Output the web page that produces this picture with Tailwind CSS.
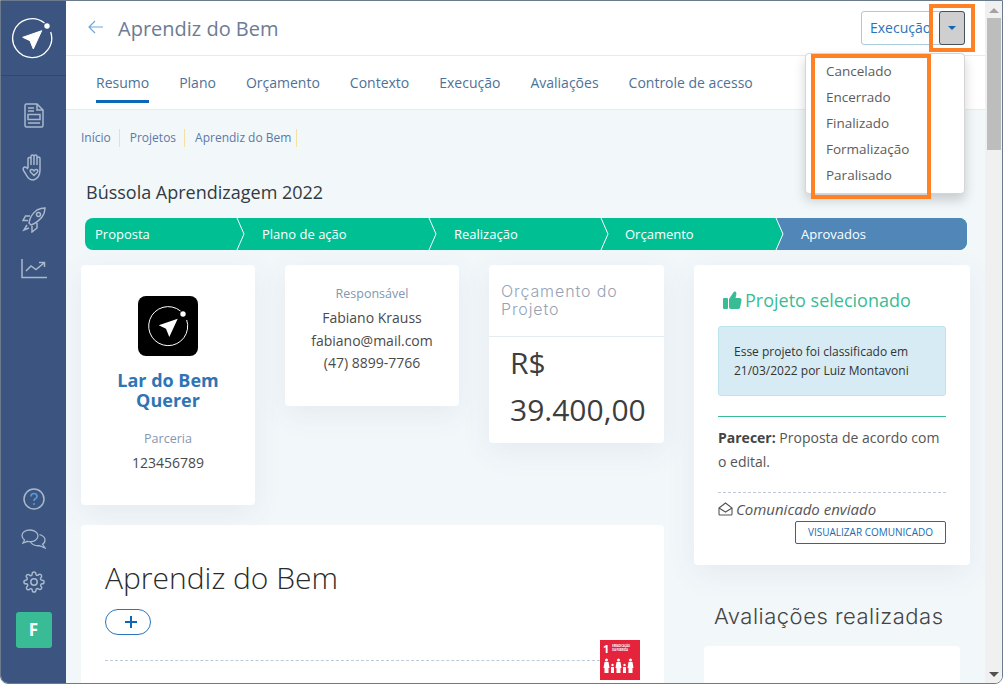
<!DOCTYPE html>
<html lang="pt-BR">
<head>
  <meta charset="UTF-8">
  <title>Aprendiz do Bem</title>
  <script src="https://cdn.jsdelivr.net/npm/@tailwindcss/browser@4"></script>
</head>
<body class="bg-white">
  <div class="relative w-[1003px] h-[684px] flex overflow-hidden border border-[#6b7a8d] rounded-br-lg rounded-bl-lg font-['Open_Sans',sans-serif]">

    <!-- Sidebar -->
    <aside class="w-[65px] shrink-0 bg-[#3b5580] flex flex-col items-center">
      <div class="w-full h-[75px] shrink-0 border-b border-[#2f4870] flex items-center justify-center pr-[3px]">
        <svg width="42" height="42" viewBox="0 0 42 42" fill="none">
          <path d="M33.500 6A19.500 19.500 0 1 0 39.700 15" stroke="#fff" stroke-width="1.300"/>
          <circle cx="36" cy="9" r="2.700" fill="#fff"/>
          <path d="M11.700 20.300L30.700 13.700L22.300 32L19 23.700Z" fill="#fff" stroke="#fff" stroke-linejoin="round"/>
        </svg>
      </div>
      <div class="flex flex-col items-center gap-[26px] mt-[27px] text-[#a9b8cc]">
        <svg width="20" height="25" viewBox="0 0 20 25" fill="none" stroke="currentColor" stroke-width="1.500">
          <path d="M1 2.500Q1 1 2.500 1H13L19 7V22.500Q19 24 17.500 24H2.500Q1 24 1 22.500Z"/>
          <path d="M4 5H10M4 8H10M13 1V7H19M4 20H16"/>
          <rect x="4" y="11.500" width="12" height="5"/>
        </svg>
        <svg width="24" height="27" viewBox="0 0 24 27" fill="none" stroke="currentColor" stroke-width="1.500">
          <path d="M6 14V5Q6 3.500 7.500 3.500T9 5V11M9 11V2.500Q9 1 10.500 1T12 2.500V11M12 11V2.500Q12 1 13.500 1T15 2.500V11M15 11V4.500Q15 3 16.500 3T18 4.500V16Q18 24 11.500 26Q7 26 5 22L1.500 16.500Q.5 14 2.500 13Q4 12.500 6 15"/>
          <path d="M12 21.500L8.500 18Q7.500 16 9.500 15.500Q11 15.200 12 17Q13 15.200 14.500 15.500Q16.500 16 15.500 18Z"/>
        </svg>
        <svg width="24" height="26" viewBox="0 0 24 26" fill="none" stroke="currentColor" stroke-width="1.500">
          <path d="M7 16Q8 8 15 3Q19 1 23 1Q23 6 20 10Q15 16 9 18Z"/>
          <path d="M8 9H3.500L1 13.500H6M15 16V21L10 25V19"/>
          <circle cx="16.500" cy="7.500" r="2"/>
          <path d="M5 18L2 23L7 21"/>
        </svg>
        <svg width="26" height="20" viewBox="0 0 26 20" fill="none" stroke="currentColor" stroke-width="1.500">
          <path d="M1 0V18.500H26"/>
          <path d="M5 12L10 7L15 10.500L23 4M18 3.500H23.500V8"/>
        </svg>
      </div>
      <div class="mt-auto flex flex-col items-center mb-[35px] text-[#a9b8cc]">
        <svg width="22" height="22" viewBox="0 0 22 22" fill="none" stroke="currentColor" stroke-width="1.500">
          <circle cx="11" cy="11" r="10"/>
          <path d="M8 8.500Q8 5.500 11 5.500T14 8.500Q14 10 12 11Q11 11.700 11 13" stroke="#5a9bd5" stroke-width="1.700"/>
          <circle cx="11" cy="16" r="1" fill="#5a9bd5" stroke="none"/>
        </svg>
        <svg class="mt-[19px]" width="25" height="20" viewBox="0 0 25 20" fill="none" stroke="currentColor" stroke-width="1.300">
          <path d="M9 1C4.500 1 1 3.300 1 6.500C1 8.500 2.300 10 3.500 11L2 14L6.500 12.300C7.500 12.600 8.500 12.700 9.500 12.700C13.500 12.700 17 10 17 6.800C17 3.500 13.500 1 9 1Z"/>
          <path d="M18.500 5.500C21.800 6.500 24 8.500 24 11C24 13 23 14.500 21.500 15.300L24 19L18.500 16.700C15 17 11 15.500 9.500 13"/>
        </svg>
        <svg class="mt-[22px]" width="22" height="22" viewBox="0 0 24 24" fill="none" stroke="currentColor" stroke-width="1.600" stroke-linejoin="round">
          <circle cx="12" cy="12" r="3.500"/>
          <path d="M19.400 15a1.650 1.650 0 0 0 .33 1.820l.06.060a2 2 0 1 1-2.830 2.830l-.06-.060a1.650 1.650 0 0 0-2.800 1.170V21a2 2 0 0 1-4 0v-.090a1.650 1.650 0 0 0-2.820-1.120l-.06.060a2 2 0 1 1-2.830-2.830l.06-.060A1.650 1.650 0 0 0 3.090 14H3a2 2 0 0 1 0-4h.090a1.650 1.650 0 0 0 1.120-2.820l-.060-.060a2 2 0 1 1 2.830-2.830l.060.060A1.650 1.650 0 0 0 10 3.090V3a2 2 0 0 1 4 0v.090a1.650 1.650 0 0 0 2.800 1.170l.060-.060a2 2 0 1 1 2.830 2.830l-.060.060A1.650 1.650 0 0 0 20.910 10H21a2 2 0 0 1 0 4h-.090a1.650 1.650 0 0 0-1.510 1z"/>
        </svg>
        <div class="mt-[19px] w-9 h-9 rounded-[3px] bg-[#39bc95] text-white font-bold text-[17px] flex items-center justify-center">F</div>
      </div>
    </aside>

    <!-- Main column -->
    <main class="w-[919px] shrink-0 flex flex-col overflow-hidden bg-[#f2f7fa]">
      <header class="h-[55px] shrink-0 bg-white border-b border-[#e5ecef] flex items-center pl-[22px] relative">
        <svg class="-mt-[2px]" width="15" height="14" viewBox="0 0 15 14" fill="none" stroke="#6ea6dc" stroke-width="1.200"><path d="M7 1L1 7L7 13M1 7H15"/></svg>
        <h1 class="ml-[15px] mt-[2px] text-[20px] text-[#6d7b94]">Aprendiz do Bem</h1>
        <div class="absolute left-[795px] top-[10px] w-[104px] h-[34px] border border-[#a9cbd9] rounded-[3px] pl-2 text-[14px] leading-[32px] text-[#2a74b8]">Execução</div>
      </header>

      <nav class="h-[54px] shrink-0 bg-white border-b border-[#e3edf1] flex gap-[30px] pl-[30px] text-[14px] text-[#4e7297] relative">
        <a class="h-[47px] leading-[53px] border-b-[3px] border-[#0f66b5]">Resumo</a>
        <a class="leading-[53px]">Plano</a>
        <a class="leading-[53px]">Orçamento</a>
        <a class="leading-[53px]">Contexto</a>
        <a class="leading-[53px]">Execução</a>
        <a class="leading-[53px]">Avaliações</a>
        <a class="leading-[53px]">Controle de acesso</a>
        <div class="absolute left-[860px] top-[9px] w-[39px] h-[32px] bg-white border-r-2 border-[#0f66b5] rounded-r-[3px]"></div>
      </nav>

      <div class="pl-[15px] pt-[19px]">
        <!-- Breadcrumb -->
        <div class="flex text-[12px] leading-[18px] text-[#5b79a8]">
          <span class="pr-2 border-r border-[#f5dfa5]">Início</span>
          <span class="pl-[10px] pr-2 border-r border-[#f5dfa5]">Projetos</span>
          <span class="pl-[10px] pr-[5px] border-r border-[#f5dfa5]">Aprendiz do Bem</span>
        </div>

        <h2 class="ml-[5px] mt-[33px] text-[18px] leading-[24px] text-[#333a42]">Bússola Aprendizagem 2022</h2>

        <!-- Steps -->
        <div class="relative flex ml-1 mt-[14px] w-[882px] h-8 rounded-lg overflow-hidden text-[13px] text-white bg-[#00bf93]">
          <div class="w-[155px] pl-[10px] leading-8">Proposta</div>
          <div class="w-[192px] pl-[22px] leading-8">Plano de ação</div>
          <div class="w-[172px] pl-[22px] leading-8">Realização</div>
          <div class="w-[171px] pl-[21px] leading-8">Orçamento</div>
          <div class="flex-1 pl-[26px] leading-8 bg-[#5087b8]">Aprovados</div>
          <svg class="absolute inset-0" width="882" height="32" fill="none" stroke="#fff" stroke-width="1">
            <path d="M152 0L159 16L152 32M344 0L351 16L344 32M516 0L523 16L516 32"/>
            <path d="M690 0H691L698 16L691 32H690Z" fill="#00bf93" stroke="none"/>
            <path d="M691 0L698 16L691 32"/>
          </svg>
        </div>

        <div class="grid grid-cols-[583px_276px] gap-x-[30px] mt-[15px]">
          <!-- Left column -->
          <div class="flex flex-col gap-5">
            <div class="flex items-start gap-[30px]">
              <section class="w-[174px] h-[240px] bg-white rounded-[4px] shadow-[0_8px_30px_rgba(60,90,120,0.08)] flex flex-col items-center pt-[31px] text-center">
                <div class="w-[60px] h-[60px] bg-black rounded-lg flex items-center justify-center">
                  <svg width="42" height="42" viewBox="0 0 42 42" fill="none">
                    <path d="M33.500 6A19.500 19.500 0 1 0 39.700 15" stroke="#fff" stroke-width="1"/>
                    <circle cx="36" cy="9" r="2.700" fill="#fff"/>
                    <path d="M11.700 20.300L30.700 13.700L22.300 32L19 23.700Z" fill="#fff"/>
                  </svg>
                </div>
                <h3 class="mt-[14px] text-[18px] leading-5 font-bold text-[#2f75b5]">Lar do Bem<br>Querer</h3>
                <p class="mt-[20px] text-[12.500px] leading-[18px] text-[#8496b0]">Parceria</p>
                <p class="mt-[6px] text-[14px] leading-[18px] text-[#4a4a4a]">123456789</p>
              </section>

              <section class="w-[174px] h-[141px] bg-white rounded-[4px] shadow-[0_8px_30px_rgba(60,90,120,0.08)] pt-[20px] text-center text-[14px] leading-[22.500px] text-[#4a4a4a]">
                <p class="text-[12.500px] leading-[18px] text-[#8496b0] mb-1">Responsável</p>
                <p>Fabiano Krauss</p>
                <p>fabiano@mail.com</p>
                <p>(47) 8899-7766</p>
              </section>

              <section class="w-[175px] h-[178px] bg-white rounded-[4px] shadow-[0_8px_30px_rgba(60,90,120,0.08)]">
                <h3 class="h-[72px] border-b border-[#e3edf1] pl-3 pr-8 pt-[17px] font-['Inter',sans-serif] font-light text-[16px] tracking-[0.9px] leading-[18px] text-[#97a3b5]">Orçamento do Projeto</h3>
                <p class="pl-[21px] pt-[2px] text-[30px] leading-[47px] text-[#3d3d3d]">R$<br>39.400,00</p>
              </section>
            </div>

            <section class="h-[200px] bg-white rounded-[4px] px-6 pt-[32px] relative">
              <h2 class="text-[30px] leading-[42px] font-light text-[#2b2b2b]">Aprendiz do Bem</h2>
              <button class="mt-[10px] w-[46px] h-[26px] pl-[5px] border border-[#2a74b8] rounded-full flex items-center justify-center text-[#0f66b5]">
                <svg width="12" height="12" viewBox="0 0 12 12" stroke="currentColor" stroke-width="2"><path d="M6 0V12M0 6H12"/></svg>
              </button>
              <div class="mt-[25px] border-t border-dashed border-[#bccbdb]"></div>
              <!-- ODS tile -->
              <div class="absolute left-[519px] top-[115px] w-10 h-10 bg-[#e5243b] text-white overflow-hidden">
                <div class="flex items-start pl-[3px] pt-1">
                  <span class="text-[11px] leading-[10px] font-bold">1</span>
                  <span class="ml-[3px] text-[2.500px] leading-[4px] font-bold">ERRADICAÇÃO<br>DA POBREZA</span>
                </div>
                <svg class="ml-[3px] mt-1" width="33" height="15" viewBox="0 0 32 15" fill="#fff">
                  <circle cx="3" cy="2" r="1.500"/><path d="M1 4H5L6 10H5V15H1V10H0Z"/>
                  <circle cx="9" cy="7" r="1.200"/><path d="M7.500 9H10.500V15H7.500Z"/>
                  <circle cx="15" cy="2" r="1.500"/><path d="M13 4H17L18 10H17V15H13V10H12Z"/>
                  <circle cx="21" cy="7" r="1.200"/><path d="M19.500 9H22.500V15H19.500Z"/>
                  <circle cx="27" cy="2" r="1.500"/><path d="M25 4H29L30 10H29V15H25V10H24Z"/>
                </svg>
              </div>
            </section>
          </div>

          <!-- Right column -->
          <div>
            <section class="h-[300px] bg-white rounded-[4px] shadow-[0_8px_30px_rgba(60,90,120,0.08)] px-6 pt-[21px]">
              <h3 class="flex items-center gap-[3px] pl-1 text-[18px] leading-[28px] text-[#39bc95]">
                <svg width="20" height="20" viewBox="0 0 20 20" fill="#39bc95"><rect x="1" y="8" width="5" height="11" rx="1"/><path d="M7 9L11 3Q11.500 1 13.500 1.500Q15 2.500 14 6L13.500 8H18Q20 8.500 19.500 10.500L18 18Q17.500 19 16 19H9Q7 19 7 17Z"/></svg>
                Projeto selecionado
              </h3>
              <div class="mt-3 h-[70px] bg-[#d7ebf4] border border-[#bfe3ee] rounded-[3px] px-[15px] pt-[15px] text-[12px] leading-[19px] text-[#333]">Esse projeto foi classificado em 21/03/2022 por Luiz Montavoni</div>
              <div class="mt-5 border-t border-[#39bc95]"></div>
              <p class="mt-[9px] text-[14px] leading-[24px] text-[#555]"><b class="text-[#444]">Parecer:</b> Proposta de acordo com o edital.</p>
              <div class="mt-[18px] border-t border-dashed border-[#bccbdb]"></div>
              <p class="mt-[6px] flex items-center gap-[3px] text-[15px] leading-[20px] italic text-[#555]">
                <svg width="15" height="14" viewBox="0 0 15 14" fill="none" stroke="#555" stroke-width="1.100"><path d="M1 6L7.500 1L14 6V12Q14 13 13 13H2Q1 13 1 12Z"/><path d="M1 6L7.500 10L14 6"/></svg>
                Comunicado enviado
              </p>
              <div class="flex justify-end mt-[2px]">
                <button class="w-[151px] h-[23px] border border-[#1a6bb0] rounded-[2px] text-[10px] font-medium text-[#1a6bb0]">VISUALIZAR COMUNICADO</button>
              </div>
            </section>
            <h2 class="mt-[37px] pl-5 font-['Inter',sans-serif] font-light text-[22px] tracking-[0.5px] leading-[28px] text-[#444]">Avaliações realizadas</h2>
            <section class="mt-[16px] ml-[10px] w-[256px] h-[40px] bg-white rounded-[4px]"></section>
          </div>
        </div>
      </div>
    </main>

    <!-- Scrollbar -->
    <div class="relative flex-1 bg-[#f0f0f0]">
      <div class="absolute left-[2px] top-[17px] w-[14px] h-[132px] bg-[#bdbdbd]"></div>
      <div class="absolute left-[4px] top-[7px] border-x-[5px] border-x-transparent border-b-[5px] border-b-[#a3a3a3]"></div>
      <div class="absolute left-[4px] bottom-[6px] border-x-[5px] border-x-transparent border-t-[5px] border-t-[#505050]"></div>
    </div>

    <!-- Status dropdown, open over the page -->
    <div class="absolute left-[938px] top-[10px] w-[26px] h-[34px] bg-[#cfcfcf] border border-[#44525f] rounded-[3px] flex items-center justify-center">
      <div class="border-x-[4px] border-x-transparent border-t-[4px] border-t-[#0f66b5]"></div>
    </div>
    <div class="absolute left-[804px] top-[52px] w-[160px] h-[141px] bg-white border border-[#d5d5d5] rounded-[4px] shadow-[0_6px_12px_rgba(0,0,0,0.18)] pl-5 pt-1 text-[13.500px] leading-[26px] text-[#5c5c5c]">
      <p>Cancelado</p>
      <p>Encerrado</p>
      <p>Finalizado</p>
      <p>Formalização</p>
      <p>Paralisado</p>
    </div>

    <!-- Orange callouts -->
    <div class="absolute left-[928px] top-[3px] w-[46px] h-[48px] border-4 border-[#ff8125]"></div>
    <div class="absolute left-[810px] top-[53px] w-[120px] h-[145px] border-4 border-[#ff8125]"></div>
  </div>
</body>
</html>
